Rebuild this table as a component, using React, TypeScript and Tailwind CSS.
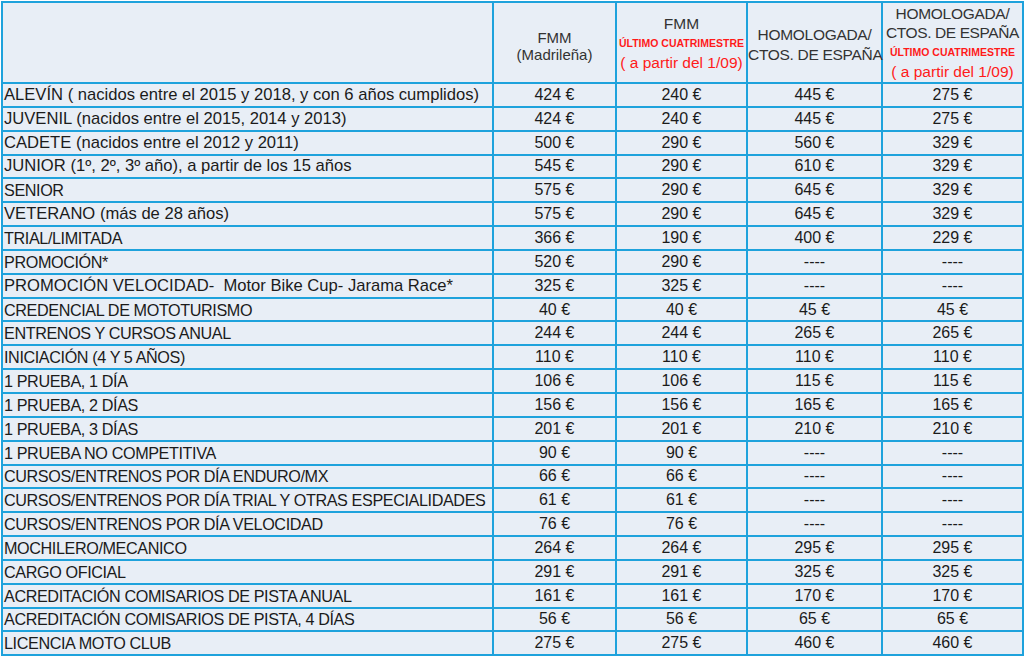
type Row = {
    label: string;
    fmm: string;
    fmmLast: string;
    homo: string;
    homoLast: string;
};

const rows: Row[] = [
    { label: 'ALEVÍN ( nacidos entre el 2015 y 2018, y con 6 años cumplidos)', fmm: '424 €', fmmLast: '240 €', homo: '445 €', homoLast: '275 €' },
    { label: 'JUVENIL (nacidos entre el 2015, 2014 y 2013)', fmm: '424 €', fmmLast: '240 €', homo: '445 €', homoLast: '275 €' },
    { label: 'CADETE (nacidos entre el 2012 y 2011)', fmm: '500 €', fmmLast: '290 €', homo: '560 €', homoLast: '329 €' },
    { label: 'JUNIOR (1º, 2º, 3º año), a partir de los 15 años', fmm: '545 €', fmmLast: '290 €', homo: '610 €', homoLast: '329 €' },
    { label: 'SENIOR', fmm: '575 €', fmmLast: '290 €', homo: '645 €', homoLast: '329 €' },
    { label: 'VETERANO (más de 28 años)', fmm: '575 €', fmmLast: '290 €', homo: '645 €', homoLast: '329 €' },
    { label: 'TRIAL/LIMITADA', fmm: '366 €', fmmLast: '190 €', homo: '400 €', homoLast: '229 €' },
    { label: 'PROMOCIÓN*', fmm: '520 €', fmmLast: '290 €', homo: '----', homoLast: '----' },
    { label: 'PROMOCIÓN VELOCIDAD-  Motor Bike Cup- Jarama Race*', fmm: '325 €', fmmLast: '325 €', homo: '----', homoLast: '----' },
    { label: 'CREDENCIAL DE MOTOTURISMO', fmm: '40 €', fmmLast: '40 €', homo: '45 €', homoLast: '45 €' },
    { label: 'ENTRENOS Y CURSOS ANUAL', fmm: '244 €', fmmLast: '244 €', homo: '265 €', homoLast: '265 €' },
    { label: 'INICIACIÓN (4 Y 5 AÑOS)', fmm: '110 €', fmmLast: '110 €', homo: '110 €', homoLast: '110 €' },
    { label: '1 PRUEBA, 1 DÍA', fmm: '106 €', fmmLast: '106 €', homo: '115 €', homoLast: '115 €' },
    { label: '1 PRUEBA, 2 DÍAS', fmm: '156 €', fmmLast: '156 €', homo: '165 €', homoLast: '165 €' },
    { label: '1 PRUEBA, 3 DÍAS', fmm: '201 €', fmmLast: '201 €', homo: '210 €', homoLast: '210 €' },
    { label: '1 PRUEBA NO COMPETITIVA', fmm: '90 €', fmmLast: '90 €', homo: '----', homoLast: '----' },
    { label: 'CURSOS/ENTRENOS POR DÍA ENDURO/MX', fmm: '66 €', fmmLast: '66 €', homo: '----', homoLast: '----' },
    { label: 'CURSOS/ENTRENOS POR DÍA TRIAL Y OTRAS ESPECIALIDADES', fmm: '61 €', fmmLast: '61 €', homo: '----', homoLast: '----' },
    { label: 'CURSOS/ENTRENOS POR DÍA VELOCIDAD', fmm: '76 €', fmmLast: '76 €', homo: '----', homoLast: '----' },
    { label: 'MOCHILERO/MECANICO', fmm: '264 €', fmmLast: '264 €', homo: '295 €', homoLast: '295 €' },
    { label: 'CARGO OFICIAL', fmm: '291 €', fmmLast: '291 €', homo: '325 €', homoLast: '325 €' },
    { label: 'ACREDITACIÓN COMISARIOS DE PISTA ANUAL', fmm: '161 €', fmmLast: '161 €', homo: '170 €', homoLast: '170 €' },
    { label: 'ACREDITACIÓN COMISARIOS DE PISTA, 4 DÍAS', fmm: '56 €', fmmLast: '56 €', homo: '65 €', homoLast: '65 €' },
    { label: 'LICENCIA MOTO CLUB', fmm: '275 €', fmmLast: '275 €', homo: '460 €', homoLast: '460 €' },
];

const cell = 'border-2 border-[#1ea2dc] p-0';

// all-caps labels run narrower in the original font
const isCaps = (s: string) => s === s.toUpperCase();

function RedNote() {
    return (
        <>
            <div className="text-[10.5px] font-bold leading-[20px] text-[#ff1a1a]">ÚLTIMO CUATRIMESTRE</div>
            <div className="text-[15.5px] leading-[19px] text-[#ff1a1a]">( a partir del 1/09)</div>
        </>
    );
}

export default function App() {
    return (
        <div className="min-h-[666px] w-[1024px] bg-white pt-[1px] font-['Liberation_Sans',Arial,sans-serif] text-[#1b1b1b]">
            <table className="ml-[1px] w-[1021px] table-fixed border-collapse bg-[#e8eef6]">
                <colgroup>
                    <col className="w-[491px]" />
                    <col className="w-[123px]" />
                    <col className="w-[131px]" />
                    <col className="w-[135px]" />
                    <col className="w-[141px]" />
                </colgroup>
                <thead>
                    <tr className="h-[81px] text-center text-[#333]">
                        <th className={cell}></th>
                        <th className={`${cell} align-middle font-normal`}>
                            <div className="pt-[6px] text-[15px] leading-[17px]">FMM</div>
                            <div className="text-[15px] leading-[17px]">(Madrileña)</div>
                        </th>
                        <th className={`${cell} align-middle font-normal`}>
                            <div className="text-[15.5px] leading-[19px]">FMM</div>
                            <RedNote />
                        </th>
                        <th className={`${cell} whitespace-nowrap align-middle font-normal tracking-[-0.3px]`}>
                            <div className="pt-[4px] text-[15.5px] leading-[20px]">HOMOLOGADA/</div>
                            <div className="text-[15.5px] leading-[20px]">CTOS. DE ESPAÑA</div>
                        </th>
                        <th className={`${cell} whitespace-nowrap align-middle font-normal`}>
                            <div className="text-[15.5px] leading-[19px] tracking-[-0.3px]">HOMOLOGADA/</div>
                            <div className="text-[15.5px] leading-[19px] tracking-[-0.4px]">CTOS. DE ESPAÑA</div>
                            <RedNote />
                        </th>
                    </tr>
                </thead>
                <tbody>
                    {rows.map((row) => (
                        <tr key={row.label} className="h-[23.85px] text-[16px] leading-[20px]">
                            <td
                                className={`${cell} whitespace-pre pl-[1px] text-left ${
                                    isCaps(row.label) ? 'text-[16.2px] tracking-[-0.4px]' : 'text-[16.6px]'
                                }`}>
                                {row.label}
                            </td>
                            <td className={`${cell} text-center`}>{row.fmm}</td>
                            <td className={`${cell} text-center`}>{row.fmmLast}</td>
                            <td className={`${cell} text-center`}>{row.homo}</td>
                            <td className={`${cell} text-center`}>{row.homoLast}</td>
                        </tr>
                    ))}
                </tbody>
            </table>
        </div>
    );
}
